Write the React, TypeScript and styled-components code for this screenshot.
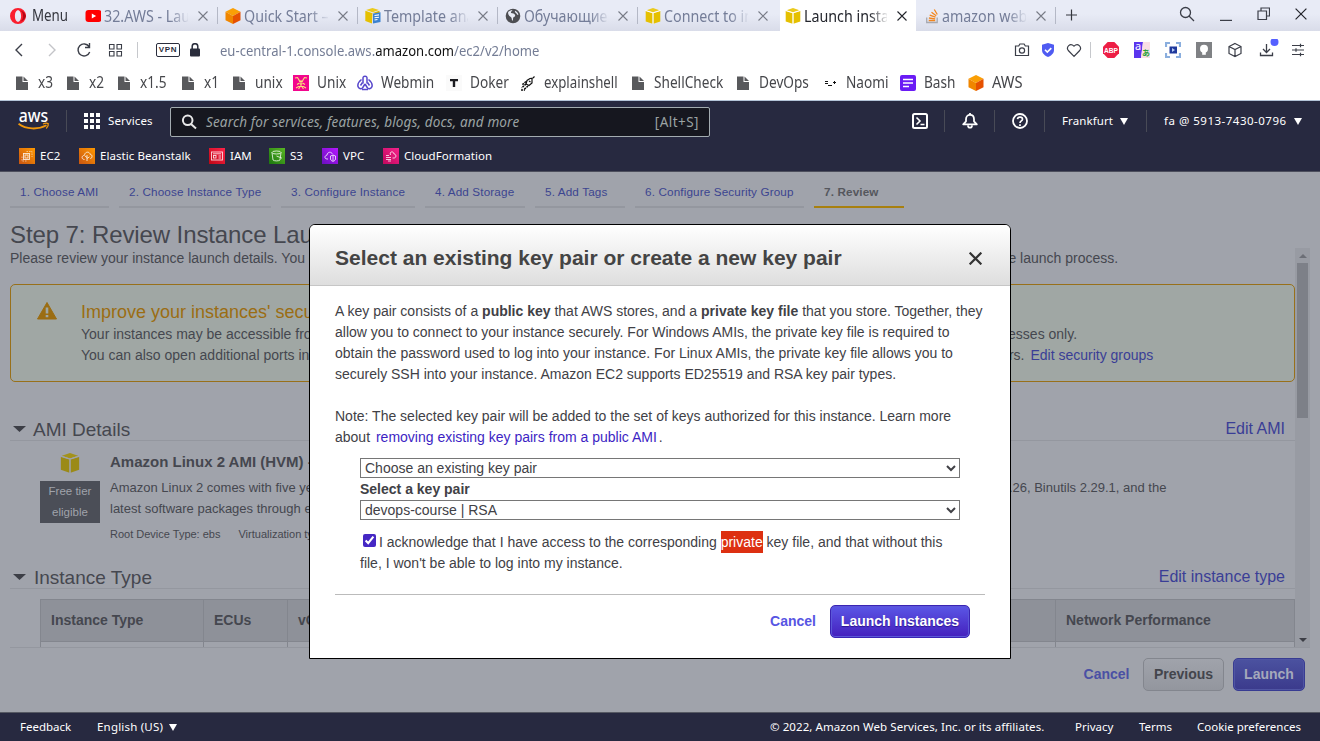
import React from "react";
import styled, { createGlobalStyle, css } from "styled-components";

const GlobalStyle = createGlobalStyle`
  *, *::before, *::after { box-sizing: border-box; }
  html, body { margin: 0; padding: 0; overflow: hidden; }
  body { font-family: "Liberation Sans", Arial, sans-serif; font-size: 14px; line-height: 21px; color: #45474f; }
  svg { display: block; flex: none; }
`;

const uiFont = css`
  font-family: "Noto Sans", "Open Sans", sans-serif;
`;

/* ---------- window ---------- */
const Window = styled.div`
  position: relative;
  width: 1320px;
  height: 741px;
  overflow: hidden;
  display: flex;
  flex-direction: column;
  background: #a0a3ab;
`;

const Label = styled.span<{ $ls?: number }>`
  letter-spacing: ${(p) => p.$ls ?? 0}px;
  padding-bottom: 2px;
  white-space: nowrap;
`;

/* Narrow lettering of the browser's own interface. */
const Condensed = styled.span<{ $by?: number }>`
  display: inline-block;
  white-space: nowrap;
  transform: scaleX(${(p) => p.$by ?? 0.875});
  transform-origin: left center;
`;

/* ---------- browser tab strip ---------- */
const TabStrip = styled.div`
  ${uiFont}
  flex: none;
  height: 31px;
  display: flex;
  align-items: stretch;
  background: linear-gradient(#e8ebf6 0 45%, #d9dce9);
  font-size: 15.5px;
  color: #747d98;
`;
const MenuButton = styled.div`
  width: 78px;
  padding-left: 10px;
  display: flex;
  align-items: center;
  gap: 6px;
  color: #35373f;
`;
const Tab = styled.div<{ $active?: boolean }>`
  width: ${(p) => (p.$active ? 136 : 140)}px;
  padding-left: ${(p) => (p.$active ? 5 : 7)}px;
  display: flex;
  align-items: center;
  color: ${(p) => (p.$active ? "#24262d" : "inherit")};
  background: ${(p) => (p.$active ? "#fff" : "transparent")};
  margin-left: ${(p) => (p.$active ? 2 : 0)}px;
`;
const TabTitle = styled.span`
  margin-left: 3px;
  padding-top: 1px;
  width: 87px;
  overflow: hidden;
  white-space: nowrap;
  mask-image: linear-gradient(90deg, #000 78%, transparent 102%);
`;
const TabClose = styled.span`
  margin-left: 10px;
  width: 14px;
`;
const TabDivider = styled.span<{ $hidden?: boolean }>`
  width: 1px;
  height: 17px;
  margin-left: 5px;
  background: ${(p) => (p.$hidden ? "transparent" : "#b4b8c6")};
`;
const WindowControls = styled.div`
  margin-left: auto;
  display: flex;
  align-items: center;
  padding: 0 13px 3px 0;
  gap: 25px;
`;

/* ---------- address bar ---------- */
const AddressBar = styled.div`
  ${uiFont}
  flex: none;
  height: 38px;
  display: flex;
  align-items: center;
  padding: 0 15px 0 12px;
  background: #fff;
`;
const Cell = styled.span<{ $w: number }>`
  flex: none;
  width: ${(p) => p.$w}px;
  display: flex;
  align-items: center;
`;
const VpnTag = styled.span`
  width: 24px;
  height: 14px;
  border: 1.5px solid #2a2d3c;
  border-radius: 2px;
  font-family: "Liberation Sans", Arial, sans-serif;
  font-size: 8px;
  font-weight: 700;
  line-height: 12px;
  text-align: center;
  letter-spacing: 0.7px;
  color: #2a2d3c;
`;
const Url = styled.span`
  flex: 1;
  font-size: 14.3px;
  color: #747d95;
  white-space: nowrap;
  b { font-weight: 400; color: #111; }
`;
const VLine = styled.span<{ $h: number; $c: string }>`
  width: 1px;
  height: ${(p) => p.$h}px;
  background: ${(p) => p.$c};
`;

/* ---------- bookmarks ---------- */
const Bookmarks = styled.div`
  ${uiFont}
  flex: none;
  height: 32px;
  display: flex;
  align-items: center;
  padding: 0 0 4px 14px;
  background: #fff;
  border-bottom: 1px solid #b4c4d8;
  font-size: 15.5px;
  color: #46474b;
`;
const Bookmark = styled.span<{ $w: number }>`
  flex: none;
  width: ${(p) => p.$w}px;
  display: flex;
  align-items: center;
  gap: 8px;
`;

/* ---------- console header ---------- */
const ConsoleHeader = styled.header`
  ${uiFont}
  flex: none;
  height: 71px;
  background: #272940;
  border-bottom: 1px solid #4d4f5d;
  color: #fff;
  font-size: 11.5px;
`;
const NavRow = styled.div`
  height: 40px;
  display: flex;
  align-items: center;
`;
const SearchBox = styled.div`
  width: 540px;
  height: 30px;
  margin-top: 1px;
  padding: 0 10px 0 10px;
  display: flex;
  align-items: center;
  gap: 9px;
  background: #16171f;
  border: 1px solid #a3acb0;
  border-radius: 2px;
  font-size: 13.5px;
  color: #9ba3a3;
  & > span { padding: 1px 0 0; }
`;
const SearchHint = styled.span`
  flex: 1;
  font-style: italic;
  white-space: nowrap;
  letter-spacing: 0.15px;
`;
const NavItem = styled.div<{ $w: number; $left?: number; $last?: boolean }>`
  width: ${(p) => p.$w}px;
  height: 22px;
  padding-left: ${(p) => p.$left ?? 17}px;
  display: flex;
  align-items: center;
  gap: 7px;
  border-right: ${(p) => (p.$last ? 0 : 1)}px solid #484a56;
`;
const Favorites = styled.div`
  height: 30px;
  display: flex;
  align-items: center;
  padding-left: 19px;
`;
const Favorite = styled.span<{ $w: number }>`
  width: ${(p) => p.$w}px;
  display: flex;
  align-items: center;
  gap: 5px;
`;

/* ---------- wizard ---------- */
const Wizard = styled.main`
  flex: none;
  height: 540px;
  display: flex;
  flex-direction: column;
  padding-left: 10px;
`;
const Steps = styled.div`
  height: 36px;
  display: flex;
  gap: 10px;
`;
const Step = styled.div<{ $w: number; $current?: boolean }>`
  width: ${(p) => p.$w}px;
  padding: 9px 0 0 10px;
  font-size: 11.7px;
  letter-spacing: 0.14px;
  white-space: nowrap;
  font-weight: ${(p) => (p.$current ? 700 : 400)};
  color: ${(p) => (p.$current ? "#55575d" : "#3c4590")};
  border-bottom: 2px solid ${(p) => (p.$current ? "#a8800f" : "#94979f")};
`;
const StepTitle = styled.h1`
  margin: 0;
  height: 40px;
  padding-top: 14px;
  font-size: 24px;
  line-height: 26px;
  font-weight: 400;
  letter-spacing: -0.1px;
`;
const Scroller = styled.div`
  width: 1300px;
  height: 400px;
  display: flex;
  border-bottom: 1px solid #94979f;
  overflow: hidden;
`;
const ScrollBody = styled.div`
  width: 1285px;
  white-space: nowrap;
`;
const ScrollTrack = styled.div`
  width: 15px;
  display: flex;
  flex-direction: column;
  align-items: center;
  background: #989ba3;
`;
const ScrollThumb = styled.div`
  width: 11px;
  height: 155px;
  background: #7d8088;
`;
const ScrollArrow = styled.div<{ $down?: boolean }>`
  height: 15px;
  display: flex;
  align-items: center;
  margin-top: ${(p) => (p.$down ? "auto" : 0)};
`;
const Intro = styled.p`
  margin: 0;
  height: 36px;
`;
const Warning = styled.div`
  height: 98px;
  padding: 16px 0 0 26px;
  display: flex;
  gap: 24px;
  border: 1px solid #98701a;
  border-radius: 5px;
  background: #a0a7a4;
`;
const WarningTitle = styled.div`
  height: 23px;
  font-size: 18px;
  line-height: 22px;
  color: #9b6d13;
`;
const Link = styled.a<{ $gap?: number }>`
  margin-left: ${(p) => p.$gap ?? 0}px;
  color: #3a3e96;
`;
const SectionHead = styled.div<{ $mt: number; $gap: number }>`
  height: 23px;
  margin-top: ${(p) => p.$mt}px;
  padding: 0 10px 0 3px;
  display: flex;
  align-items: center;
  gap: ${(p) => p.$gap}px;
  border-bottom: 1px solid #94979f;
  font-size: 19px;
  a { margin-left: auto; padding-bottom: 2px; font-size: 16px; }
`;
const Ami = styled.div`
  height: 124px;
  padding: 10px 0 0 30px;
  display: flex;
  gap: 10px;
`;
const AmiLogo = styled.div`
  width: 60px;
  display: flex;
  flex-direction: column;
  align-items: center;
  gap: 8px;
  padding-top: 2px;
`;
const FreeTier = styled.div`
  width: 60px;
  height: 42px;
  background: #4b4e57;
  color: #a0a3ab;
  font-size: 11.5px;
  line-height: 21px;
  text-align: center;
  white-space: normal;
  span { display: block; margin-top: -1px; }
`;
const AmiText = styled.div`
  font-size: 13px;
  strong { display: block; font-size: 15px; height: 26px; line-height: 21px; }
`;
const AmiMeta = styled.div`
  display: flex;
  gap: 18px;
  padding-top: 5px;
  font-size: 11px;
`;
const TypeTable = styled.div`
  margin: 10px 0 0 30px;
  border: 1px solid #83868e;
`;
const TypeRow = styled.div<{ $head?: boolean }>`
  display: flex;
  height: ${(p) => (p.$head ? 42 : 30)}px;
  background: ${(p) => (p.$head ? "#8e9199" : "transparent")};
  border-bottom: 1px solid #83868e;
`;
const TypeCell = styled.div<{ $w: number }>`
  width: ${(p) => p.$w}px;
  padding-left: 10px;
  line-height: 41px;
  font-weight: 700;
  border-right: 1px solid #83868e;
  &:last-child { border-right: 0; }
`;
const Actions = styled.div`
  display: flex;
  justify-content: flex-end;
  align-items: center;
  gap: 9px;
  padding: 10px 15px 0 0;
`;
const Button = styled.button<{ $tone: "dimGrey" | "dimBlue" | "blue" | "text" | "dimText"; $w: number }>`
  width: ${(p) => p.$w}px;
  height: 33px;
  padding: 0;
  font: 700 14px/31px "Liberation Sans", Arial, sans-serif;
  border-radius: 5px;
  border: 1px solid transparent;
  white-space: nowrap;
  ${(p) =>
    ({
      dimGrey: css`background: linear-gradient(#a0a3ab, #93969e); border-color: #83868e; color: #43454c;`,
      dimBlue: css`background: linear-gradient(#4b52a0, #3b3a8c); border-color: #383c92; color: #a5a9bb; box-shadow: inset 0 0 0 1px #5055a3;`,
      blue: css`background: linear-gradient(#5b57e6, #4420bd); border-color: #3a24b4; color: #fff; box-shadow: inset 0 0 0 1px #5b57d8; text-shadow: 0 1px 1px #2a1590;`,
      text: css`background: none; color: #5755e3;`,
      dimText: css`background: none; color: #4a50a4; padding-left: 1px;`,
    })[p.$tone]}
`;

/* ---------- footer ---------- */
const Footer = styled.footer`
  ${uiFont}
  flex: 1;
  display: flex;
  align-items: center;
  background: #272940;
  border-top: 1px solid #565963;
  color: #fff;
  font-size: 11.5px;
  padding-left: 20px;
`;

/* ---------- modal ---------- */
const Dialog = styled.section`
  position: absolute;
  left: 309px;
  top: 224px;
  width: 702px;
  height: 435px;
  background: #fff;
  border: 1px solid #000;
  border-radius: 6px 6px 0 0;
  overflow: hidden;
  color: #414146;
`;
const DialogHead = styled.div`
  height: 61px;
  padding: 6px 28px 0 25px;
  display: flex;
  align-items: center;
  justify-content: space-between;
  background: linear-gradient(#fff, #dedede);
  border-bottom: 1px solid #c6c6c6;
`;
const DialogTitle = styled.h2`
  margin: 0;
  font-size: 21px;
  line-height: 24px;
  white-space: nowrap;
  color: #444;
`;
const DialogBody = styled.div`
  margin: 0 25px;
  height: 309px;
  padding-top: 15px;
  border-bottom: 1px solid #bbb;
  p { margin: 0 0 21px; }
  a { color: #3d1fc4; margin: 0 2px; }
`;
const KeyForm = styled.div`
  margin: -11px 25px 0;
`;
const KeySelect = styled.select`
  display: block;
  width: 600px;
  height: 20px;
  padding: 0;
  border: 1px solid #767676;
  border-radius: 0;
  background-color: #fff;
  font: 14px "Liberation Sans", Arial, sans-serif;
  color: #414146;
`;
const FieldName = styled.label`
  display: block;
  height: 22px;
  line-height: 22px;
  font-weight: 700;
`;
const Acknowledge = styled.label`
  display: block;
  margin-top: 12px;
  input { width: 13px; height: 13px; margin: 0 3px 0 3px; vertical-align: 0; accent-color: #4527c4; }
  mark { background: #dd3011; color: #fff; padding: 3px 0; }
`;
const DialogActions = styled.div`
  display: flex;
  justify-content: flex-end;
  gap: 9px;
  padding: 10px 40px 0 0;
`;

/* ---------- icons ---------- */
const Cross = ({ s = 10, c = "#6f737f", w = 1.2 }) => (
  <svg width={s} height={s} viewBox="0 0 10 10" stroke={c} strokeWidth={w} fill="none">
    <path d="M.5.5l9 9M9.5.5l-9 9" />
  </svg>
);
const Triangle = ({ w = 9, h = 7, c = "#fff", up = false }) => (
  <svg width={w} height={h} viewBox="0 0 10 8" preserveAspectRatio="none" fill={c}>
    <path d={up ? "M0 8L5 0l5 8z" : "M0 0h10L5 8z"} />
  </svg>
);
const Opera = () => (
  <svg width="16" height="16" viewBox="0 0 16 16">
    <path fillRule="evenodd" fill="#fa1e2d" d="M8 0a8 8 0 100 16A8 8 0 008 0zm0 2.200c1.900 0 3.100 2.600 3.100 5.800S9.900 13.800 8 13.800 4.900 11.200 4.900 8 6.100 2.200 8 2.200z" />
    <path fill="#b50716" d="M10.500 2.500A8 8 0 0116 8a8 8 0 01-5.500 5.500C12.600 12 13 10 13 8s-.4-4-2.500-5.500z" />
  </svg>
);
const YouTube = () => (
  <svg width="16" height="16" viewBox="0 0 16 16">
    <rect x=".5" y="2" width="16" height="12" rx="3" fill="#f00" />
    <path d="M6.800 5.500v5L11.100 8z" fill="#fff" />
  </svg>
);
const OrangeCube = () => (
  <svg width="16" height="16" viewBox="0 0 16 16">
    <path d="M8 0l7.500 3.800L8 8 .5 3.800z" fill="#fa9f05" />
    <path d="M15.500 3.800L8 8v8l7.500-3.800z" fill="#e65100" />
    <path d="M.5 3.800L8 8v8L.5 12.200z" fill="#f08600" />
  </svg>
);
const YellowCube = ({ s = 16, a = "#e5c000", b = "#ebca1c", gap = "#fff" }) => (
  <svg width={s} height={s} viewBox="0 0 16 16">
    <path d="M8 0l6.500 2.200L8 4.300 1.500 2.200z" fill={b} />
    <path d="M.7 2.800L7.600 5v10.800L.7 13.400z" fill={a} />
    <path d="M15.300 2.800L8.400 5v10.800l6.900-2.400z" fill={a} />
    <path d="M.3 2.500l7.700 2.400 7.700-2.400M8 4.900V16" stroke={gap} strokeWidth=".9" fill="none" />
  </svg>
);
const TemplateIcon = () => (
  <svg width="16" height="16" viewBox="0 0 16 16">
    <path d="M7.500 0l6.500 2-6.500 2.200L1 2z" fill="#ebca1c" />
    <path d="M.3 2.800L7 5v10.500L.3 13z" fill="#e5c000" />
    <path d="M7.500 5l7-2.200V5H8v9z" fill="#d9b400" />
    <path d="M8 5.500l7.500-1.300v9.800L8 15.500z" fill="#3b82d0" />
    <path d="M9.500 7.500l4.500-.6M9.500 9.800l4.500-.6M9.500 12l3-.5" stroke="#fff" strokeWidth="1.100" />
  </svg>
);
const Globe = () => (
  <svg width="16" height="16" viewBox="0 0 16 16">
    <circle cx="8" cy="8" r="7.300" fill="#4d4e52" />
    <path d="M3 4.500c1-1.700 3-2.600 4.500-2.500C7 3.500 5.500 3.200 6 5c1.500.2 4 .5 4.200 2.500.1 1.300-1.400 1-2 2.200-.3.800.2 2-.9 3.300C6.500 11 7 9.800 5.800 9 4.300 8 3.300 7.200 3 4.500zM10 2.800c2 .8 3.200 2.200 3.400 4-1.200.5-1.400-1-2.200-1.500C10.500 4.800 9.500 4 10 2.800z" fill="#e8ebf4" />
  </svg>
);
const StackOverflow = () => (
  <svg width="16" height="16" viewBox="-3 0 16 16" fill="none">
    <path d="M.7 9.500v5h10.500v-5" stroke="#a7a9b0" strokeWidth="1.300" />
    <path d="M2.700 12.500h6.500M2.900 10l6.300.8M3.700 7.200l5.800 2M5.500 4.200l4.700 3.600M8.300 1.500l3 5" stroke="#f2861f" strokeWidth="1.300" />
  </svg>
);
const Doc = () => (
  <svg width="16" height="16" viewBox="0 0 16 16" fill="#58595c">
    <path d="M2 1.500h6.500V7H14v8H2z" />
    <path d="M9.500 1.500L14 6H9.500z" />
  </svg>
);
const Lobster = () => (
  <svg width="16" height="16" viewBox="0 0 16 16">
    <rect width="16" height="16" fill="#f2068d" />
    <path d="M2 3l2.500-.5L6 5l1 2M14 3l-2.500-.5L10 5 9 7M8 5v6.500M7 6.500h2M6.800 9h2.400M4 9.500l2.500-1.500M12 9.500L9.500 8M3 13l2.500-1.500h5L13 13M5.500 14l1.500-2M10.500 14L9 12" stroke="#fbe27c" strokeWidth="1.100" fill="none" />
  </svg>
);
const Webmin = () => (
  <svg width="16" height="16" viewBox="0 0 16 16" fill="none" stroke="#5747cc" strokeWidth="1.500">
    <path d="M6 8.500V4C5.800 2 6.500 1.300 8 1.300S10.200 2 10 4v4.500" />
    <path d="M4.500 4.500C2 6.500.5 9.500 1 11.500s3 2.800 4.500 1.500L8 9" />
    <path d="M11.500 4.500C14 6.500 15.500 9.500 15 11.500s-3 2.800-4.500 1.500L8 9" />
    <path d="M3.500 10.500l2-3M12.500 10.500l-2-3M5 14.500h6" />
  </svg>
);
const TIcon = () => (
  <svg width="16" height="16" viewBox="0 0 16 16">
    <rect width="16" height="16" fill="#fafafa" />
    <path d="M4 4h8v2.200H9.200V12H6.800V6.200H4z" fill="#1b1b1f" />
  </svg>
);
const Shell = () => (
  <svg width="16" height="16" viewBox="0 0 16 16" fill="none" stroke="#111">
    <path d="M14.500 1.500L13 3 10 3.500 7 5.500 6 9l3 1.500L12 8V3.500M9 6l1.500 1" strokeWidth="1.200" />
    <path d="M6 6.500L2 10M6 9l-4.500 4M8 11l-4 3.500M1 15h4" strokeWidth="1.500" strokeDasharray="2 .8" />
  </svg>
);
const Face = () => (
  <svg width="16" height="16" viewBox="0 0 16 16" stroke="#111" fill="none" shapeRendering="crispEdges">
    <path d="M3 6.500h3M3 8.500h3M6 10.500h4M12.500 6v3M11 7.500h3" strokeWidth="1" />
  </svg>
);
const BashIcon = () => (
  <svg width="16" height="16" viewBox="0 0 16 16">
    <rect width="16" height="16" rx="2" fill="#6a1bf5" />
    <path d="M3 4.500h10M3 8h10M3 11.500h6" stroke="#fff" strokeWidth="1.500" />
  </svg>
);

const Line: React.FC<{ w?: number; h?: number; sw?: number; c?: string; children: React.ReactNode }> = ({ w = 16, h = 16, sw = 1.2, c = "#3b3e48", children }) => (
  <svg width={w} height={h} viewBox={`0 0 ${w} ${h}`} fill="none" stroke={c} strokeWidth={sw}>
    {children}
  </svg>
);

const AwsLogo = () => (
  <svg width="32" height="24" viewBox="0 0 32 24">
    <text x="0.800" y="12.500" fill="#fff" fontFamily="Noto Sans, sans-serif" fontWeight="500" fontSize="17.500" textLength="29.500" lengthAdjust="spacingAndGlyphs">aws</text>
    <path d="M.5 14.800C8 20.500 20 21 28.500 16.300" stroke="#f0980c" strokeWidth="1.800" fill="none" />
    <path d="M25 15c2-1 4.300-1 5.200-.4.300 1.300-.7 3.800-2 5" stroke="#f0980c" strokeWidth="1.300" fill="none" />
  </svg>
);

const ServiceIcon: React.FC<{ from: string; to: string; children: React.ReactNode }> = ({ from, to, children }) => {
  const id = "g" + from.slice(1);
  return (
    <svg width="16" height="16" viewBox="0 0 16 16">
      <defs>
        <linearGradient id={id} x1="0" y1="1" x2="1" y2="0">
          <stop offset="0" stopColor={from} />
          <stop offset="1" stopColor={to} />
        </linearGradient>
      </defs>
      <rect width="16" height="16" fill={`url(#${id})`} />
      <g fill="none" stroke="#fff" strokeOpacity=".85" strokeWidth=".9">{children}</g>
    </svg>
  );
};

const tabs = [
  { icon: <YouTube />, title: "32.AWS - Launch" },
  { icon: <OrangeCube />, title: "Quick Start – AWS" },
  { icon: <TemplateIcon />, title: "Template anatomy" },
  { icon: <Globe />, title: "Обучающие" },
  { icon: <YellowCube />, title: "Connect to instance" },
  { icon: <YellowCube />, title: "Launch instance wizard", active: true },
  { icon: <StackOverflow />, title: "amazon web services" },
];

const bookmarks: [string, number, React.ReactNode][] = [
  ["x3", 51, <Doc />],
  ["x2", 51, <Doc />],
  ["x1.5", 64, <Doc />],
  ["x1", 51, <Doc />],
  ["unix", 62, <Doc />],
  ["Unix", 64, <Lobster />],
  ["Webmin", 89, <Webmin />],
  ["Doker", 74, <TIcon />],
  ["explainshell", 110, <Shell />],
  ["ShellCheck", 105, <Doc />],
  ["DevOps", 87, <Doc />],
  ["Naomi", 78, <Face />],
  ["Bash", 68, <BashIcon />],
  ["AWS", 70, <OrangeCube />],
];

const favorites: [string, number, React.ReactNode][] = [
  ["EC2", 60, <ServiceIcon from="#c85412" to="#ff9900"><rect x="4.500" y="5.500" width="6" height="6" /><rect x="6" y="7" width="3" height="3" /><path d="M7.500 3.500H13V9M3 8.500V13h4.500" strokeDasharray="1.500 1" strokeOpacity=".6" /></ServiceIcon>],
  ["Elastic Beanstalk", 130, <ServiceIcon from="#c95511" to="#fe9800"><path d="M5.500 11.500c-3.500-.2-3-4 0-4.200.3-4 5.200-4 5.600-1 2.500 0 2.600 4 .2 4.200M8 13V7M8 9.500L6 8M8 10.500l2.500-1.700" /></ServiceIcon>],
  ["IAM", 60, <ServiceIcon from="#bd0816" to="#ff2348"><rect x="2.500" y="4" width="11" height="8" /><rect x="4.500" y="7.500" width="2.500" height="2.500" /><path d="M4 5.800h8M9.500 8h2.500M9.500 10h2.500" /></ServiceIcon>],
  ["S3", 53, <ServiceIcon from="#1b760f" to="#59b624"><ellipse cx="7.500" cy="4.500" rx="4.500" ry="1.500" /><path d="M3 4.500l1 7.500c1.500 1.200 5.500 1.200 7 0l1-7.500M7.500 8l5.500 2.200" /></ServiceIcon>],
  ["VPC", 61, <ServiceIcon from="#6a0fbf" to="#b517ff"><path d="M6 11H5c-3-.3-2.500-3.500 0-3.800.3-3.700 4.700-3.700 5.300-1.200M8.500 8l2.500-1 2.500 1v3c0 1.500-2.500 2.500-2.500 2.500S8.500 12.500 8.500 11zM11 7v6" /></ServiceIcon>],
  ["CloudFormation", 110, <ServiceIcon from="#c0085d" to="#f5238b"><path d="M3 9.500h5M3 11.500h5M3 7.500h3M7.500 7C6 3 11 3 11 6c2.500 0 2.500 4 0 4h-1.500M5 13h3" /></ServiceIcon>],
];

const steps: [string, number][] = [
  ["1. Choose AMI", 99],
  ["2. Choose Instance Type", 152],
  ["3. Configure Instance", 134],
  ["4. Add Storage", 100],
  ["5. Add Tags", 90],
  ["6. Configure Security Group", 169],
  ["7. Review", 90],
];

const columns: [string, number][] = [
  ["Instance Type", 163],
  ["ECUs", 84],
  ["vCPUs", 92],
  ["Memory (GiB)", 156],
  ["Instance Storage (GB)", 230],
  ["EBS-Optimized Available", 290],
  ["Network Performance", 238],
];

export default function App() {
  return (
    <Window>
      <GlobalStyle />
      <TabStrip>
        <MenuButton><Opera /><Condensed $by={0.86}>Menu</Condensed></MenuButton>
        {tabs.map((t, i) => (
          <Tab key={t.title} $active={t.active}>
            {t.icon}
            <TabTitle><Condensed $by={0.92}>{t.title}</Condensed></TabTitle>
            <TabClose><Cross c={t.active ? "#22242b" : "#777b86"} w={1.1} /></TabClose>
            <TabDivider $hidden={i === 4 || t.active} />
          </Tab>
        ))}
        <Cell $w={25}>
          <Line w={25} c="#35373f"><path d="M15.500 1.500v11M10 7h11" /></Line>
        </Cell>
        <WindowControls>
          <Line sw={1.3}><circle cx="6.500" cy="6.500" r="5" /><path d="M10 10l5 5" /></Line>
          <Line w={12}><path d="M0 14.400h12" /></Line>
          <Line w={13} h={14}><path d="M1 4h8.500v8.500H1zM4 4V1h8.500v8H9.500" /></Line>
          <Cross s={12} c="#22242b" w={1} />
        </WindowControls>
      </TabStrip>

      <AddressBar>
        <Cell $w={33}><Line sw={1.4}><path d="M10 2L4 8l6 6" /></Line></Cell>
        <Cell $w={31}><Line c="#c3c4c8" sw={1.4}><path d="M4 2l6 6-6 6" /></Line></Cell>
        <Cell $w={32}><Line sw={1.4}><path d="M13 4.500A6 6 0 1013.700 10M13.500 1v4.500H9" /></Line></Cell>
        <Cell $w={29}><Line sw={1.1}><path d="M1.500 2.500H6V7H1.500zM9 2.500h4.500V7H9zM1.500 9.500H6V14H1.500zM9 9.500h4.500V14H9z" /></Line></Cell>
        <Cell $w={19}><VLine $h={16} $c="#c6c8cc" /></Cell>
        <Cell $w={33}><VpnTag>VPN</VpnTag></Cell>
        <Cell $w={31}>
          <svg width="12" height="14" viewBox="0 0 12 14"><rect x="1" y="5.500" width="10" height="8" rx="1" fill="#2a2d3c" /><path d="M3.200 6V3.500a2.800 2.800 0 015.600 0V6" fill="none" stroke="#2a2d3c" strokeWidth="1.500" /></svg>
        </Cell>
        <Url><Condensed $by={0.914}>eu-central-1.console.aws.<b>amazon.com</b>/ec2/v2/home</Condensed></Url>
        <Cell $w={26}><Line><path d="M1.500 4h3.200l1.200-2h4.200l1.200 2h3.200v9.500h-13z" /><circle cx="8" cy="8.500" r="2.600" /></Line></Cell>
        <Cell $w={26}>
          <svg width="16" height="16" viewBox="0 0 16 16"><path d="M8 1l6 1.800V8c0 3.500-3 5.800-6 7-3-1.200-6-3.500-6-7V2.800z" fill="#4f5bf2" /><path d="M5 7.800l2.300 2.300 4-4" stroke="#fff" strokeWidth="1.600" fill="none" /></svg>
        </Cell>
        <Cell $w={24}><Line><path d="M8 14.300L2.300 8.500C-.2 5.200 4 .2 8 4.200c4-4 8.200 1 5.700 4.300z" /></Line></Cell>
        <Cell $w={13}><VLine $h={16} $c="#c6c8cc" /></Cell>
        <Cell $w={31}>
          <svg width="16" height="16" viewBox="0 0 16 16"><path d="M4.700 0h6.600L16 4.700v6.600L11.300 16H4.700L0 11.300V4.700z" fill="#ed1e45" /><text x="1" y="11" fontSize="8" fontWeight="700" fontFamily="Liberation Sans, sans-serif" fill="#fff" textLength="14" lengthAdjust="spacingAndGlyphs">ABP</text></svg>
        </Cell>
        <Cell $w={31}>
          <svg width="16" height="16" viewBox="0 0 16 16"><path d="M0 0h9L7 16H0z" fill="#5a35ee" /><path d="M9 0h7v16H7z" fill="#f9dfe4" /><text x="1" y="8" fontSize="11" fontFamily="Noto Sans, sans-serif" fill="#fff">a</text><text x="8" y="14" fontSize="8" fontWeight="700" fontFamily="Noto Sans CJK JP, sans-serif" fill="#2aa23a">あ</text></svg>
        </Cell>
        <Cell $w={31}>
          <svg width="16" height="16" viewBox="0 0 16 16"><path d="M1 5V1h4M11 1h4v4M15 11v4h-4M5 15H1v-4" stroke="#8aaede" strokeWidth="2.200" fill="none" /><rect x="4.500" y="4.500" width="7.500" height="7" fill="#20399c" /><path d="M7 6v4l3-2z" fill="#b9cdf5" /></svg>
        </Cell>
        <Cell $w={31}>
          <svg width="16" height="16" viewBox="0 0 16 16"><rect width="16" height="16" fill="#7f8184" /><circle cx="8" cy="6.800" r="4" fill="#fff" /><path d="M6.200 10h3.600v2.800H6.200z" fill="#fff" /></svg>
        </Cell>
        <Cell $w={32}><Line><path d="M8 1.500l6 3v7l-6 3-6-3v-7zM2 4.500l6 3 6-3M8 7.500v7" /></Line></Cell>
        <Cell $w={32}>
          <svg width="22" height="22" viewBox="0 0 22 22" fill="none" stroke="#3b3e48" strokeWidth="1.300"><path d="M7.500 5v8.500M4 10l3.500 3.500L11 10M1.500 13.500v3h12v-3" /><circle cx="15.500" cy="3" r="4" fill="#5560ff" stroke="none" /></svg>
        </Cell>
        <Line w={14}><path d="M1 3.500h12M1 8h12M1 12.500h12M9.500 1.800v3.400M5 6.300v3.400M9.500 10.800v3.400" /></Line>
      </AddressBar>

      <Bookmarks>
        {bookmarks.map(([name, w, icon]) => (
          <Bookmark key={name} $w={w}>{icon}<Condensed $by={name === "AWS" ? 0.95 : name === "explainshell" ? 0.855 : 0.88}>{name}</Condensed></Bookmark>
        ))}
      </Bookmarks>

      <ConsoleHeader>
        <NavRow>
          <NavItem $w={67} $left={18}><AwsLogo /></NavItem>
          <NavItem $w={103} $left={17} $last>
            <svg width="17" height="16" viewBox="0 0 17 16" fill="#fff"><path d="M0 0h4v4H0zM6 0h4v4H6zM12 0h4v4h-4zM0 6h4v4H0zM6 6h4v4H6zM12 6h4v4h-4zM0 12h4v4H0zM6 12h4v4H6zM12 12h4v4h-4z" /></svg>
            <Label $ls={0.1}>Services</Label>
          </NavItem>
          <SearchBox>
            <Line c="#e8e8e8" sw={2}><circle cx="6.700" cy="6.300" r="4.800" /><path d="M10 10l5 4.500" /></Line>
            <SearchHint>Search for services, features, blogs, docs, and more</SearchHint>
            <Label $ls={0.45}>[Alt+S]</Label>
          </SearchBox>
          <NavItem $w={235} $left={202}>
            <Line c="#fff" sw={2}><rect x="1" y="1" width="14" height="14" rx="1.500" /><path d="M4.500 4.500L8 8l-3.500 3.500M8.500 11.500h4" strokeWidth="1.600" /></Line>
          </NavItem>
          <NavItem $w={50}>
            <Line c="#fff" sw={1.8}><path d="M1.200 11.300L4 8.300V6.200C4 3.500 5.800 1.900 8 1.900s4 1.600 4 4.300v2.100l2.800 3zM6 12.500a2 2.200 0 004 0" strokeLinejoin="round" /><path d="M8 0v2" /></Line>
          </NavItem>
          <NavItem $w={50}>
            <Line c="#fff" sw={1.8}><circle cx="8" cy="8" r="7" /><path d="M5.500 6.200c.3-3 5-2.700 5 0C10.500 8 8 7.800 8 10M8 11.300v1.600" strokeWidth="1.700" /></Line>
          </NavItem>
          <NavItem $w={102}><Label $ls={0.1}>Frankfurt</Label><Triangle w={8} /></NavItem>
          <NavItem $w={170} $last><Label $ls={0.5}>fa @ 5913-7430-0796</Label><Triangle w={8} /></NavItem>
        </NavRow>
        <Favorites>
          {favorites.map(([name, w, icon]) => (
            <Favorite key={name} $w={w}>{icon}<Label $ls={0.06}>{name}</Label></Favorite>
          ))}
        </Favorites>
      </ConsoleHeader>

      <Wizard>
        <Steps>
          {steps.map(([name, w], i) => (
            <Step key={name} $w={w} $current={i === 6}>{name}</Step>
          ))}
        </Steps>
        <StepTitle>Step 7: Review Instance Launch</StepTitle>
        <Scroller>
          <ScrollBody>
            <Intro>
              Please review your instance launch details. You can go back to edit changes for each section. Click <b>Launch</b> to assign a key pair to your instance and complete the launch process.
            </Intro>
            <Warning>
              <svg width="20" height="19" viewBox="0 0 20 19"><path d="M10 1.500l9.500 16.500H.5z" fill="#9b6d13" stroke="#9b6d13" strokeLinejoin="round" /><path d="M10 6.500v6M10 14v2.200" stroke="#a0a7a4" strokeWidth="2.600" /></svg>
              <div>
                <WarningTitle>Improve your instances' security. Your security group, launch-wizard-1, is open to the world.</WarningTitle>
                <div>Your instances may be accessible from any IP address. We recommend that you update your security group rules to allow access from known IP addresses only.</div>
                <div>You can also open additional ports in your security group to facilitate access to the application or service you're running, e.g., HTTP (80) for web servers. <Link $gap={2}>Edit security groups</Link></div>
              </div>
            </Warning>
            <SectionHead $mt={36} $gap={7}>
              <Triangle w={13} h={6} c="#3c3e46" />AMI Details<Link>Edit AMI</Link>
            </SectionHead>
            <Ami>
              <AmiLogo>
                <YellowCube s={20} a="#9b8a17" b="#a3921c" gap="#a0a3ab" />
                <FreeTier>Free tier eligible</FreeTier>
              </AmiLogo>
              <AmiText>
                <strong>Amazon Linux 2 AMI (HVM) - Kernel 5.10, SSD Volume Type</strong>
                <div>Amazon Linux 2 comes with five years support. It provides Linux kernel 5.10 tuned for optimal performance on Amazon EC2, systemd 219, GCC 7.3, Glibc 2.26, Binutils 2.29.1, and the</div>
                <div>latest software packages through extras.</div>
                <AmiMeta><span>Root Device Type: ebs</span><span>Virtualization type: hvm</span></AmiMeta>
              </AmiText>
            </Ami>
            <SectionHead $mt={1} $gap={8}>
              <Triangle w={13} h={6} c="#3c3e46" />Instance Type<Link>Edit instance type</Link>
            </SectionHead>
            <TypeTable>
              <TypeRow $head>{columns.map(([c, w]) => <TypeCell key={c} $w={w}>{c}</TypeCell>)}</TypeRow>
              <TypeRow>{columns.map(([c, w]) => <TypeCell key={c} $w={w} />)}</TypeRow>
            </TypeTable>
          </ScrollBody>
          <ScrollTrack>
            <ScrollArrow><Triangle w={8} h={4} c="#6c6f77" up /></ScrollArrow>
            <ScrollThumb />
            <ScrollArrow $down><Triangle w={8} h={4} c="#3c3e46" /></ScrollArrow>
          </ScrollTrack>
        </Scroller>
        <Actions>
          <Button $tone="dimText" $w={56}>Cancel</Button>
          <Button $tone="dimGrey" $w={81}>Previous</Button>
          <Button $tone="dimBlue" $w={72}>Launch</Button>
        </Actions>
      </Wizard>

      <Footer>
        <Cell $w={77}><Label>Feedback</Label></Cell>
        <Cell $w={673}><Label $ls={0.2}>English (US)</Label>&nbsp;&nbsp;<Triangle w={8} /></Cell>
        <Cell $w={305}><Label $ls={0.07}>© 2022, Amazon Web Services, Inc. or its affiliates.</Label></Cell>
        <Cell $w={64}><Label>Privacy</Label></Cell>
        <Cell $w={58}><Label>Terms</Label></Cell>
        <Cell $w={120}><Label>Cookie preferences</Label></Cell>
      </Footer>

      <Dialog role="dialog">
        <DialogHead>
          <DialogTitle>Select an existing key pair or create a new key pair</DialogTitle>
          <Cross s={13} c="#333" w={1.7} />
        </DialogHead>
        <DialogBody>
          <p>
            A key pair consists of a <b>public key</b> that AWS stores, and a <b>private key file</b> that you store. Together, they allow you to connect to your instance securely. For Windows AMIs, the private key file is required to obtain the password used to log into your instance. For Linux AMIs, the private key file allows you to securely SSH into your instance. Amazon EC2 supports ED25519 and RSA key pair types.
          </p>
          <p>
            Note: The selected key pair will be added to the set of keys authorized for this instance. Learn more about <a>removing existing key pairs from a public AMI</a>.
          </p>
          <KeyForm>
            <KeySelect><option>Choose an existing key pair</option></KeySelect>
            <FieldName>Select a key pair</FieldName>
            <KeySelect><option>devops-course | RSA</option></KeySelect>
            <Acknowledge>
              <input type="checkbox" defaultChecked />I acknowledge that I have access to the corresponding <mark>private</mark> key file, and that without this file, I won't be able to log into my instance.
            </Acknowledge>
          </KeyForm>
        </DialogBody>
        <DialogActions>
          <Button $tone="text" $w={56}>Cancel</Button>
          <Button $tone="blue" $w={140}>Launch Instances</Button>
        </DialogActions>
      </Dialog>
    </Window>
  );
}
